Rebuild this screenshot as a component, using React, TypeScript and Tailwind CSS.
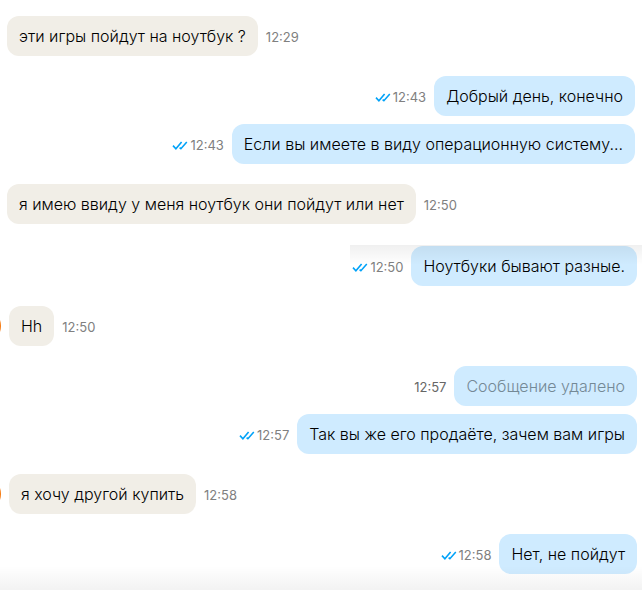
import clsx from "clsx"

type Message = {
    id: number;
    text: string;
    time: string;
    own?: boolean;
    deleted?: boolean;
    avatar?: boolean;
}

const earlier: Message[][] = [
    [{ id: 1, text: "эти игры пойдут на ноутбук ?", time: "12:29" }],
    [
        { id: 2, text: "Добрый день, конечно", time: "12:43", own: true },
        { id: 3, text: "Если вы имеете в виду операционную систему...", time: "12:43", own: true },
    ],
    [{ id: 4, text: "я имею ввиду у меня ноутбук они пойдут или нет", time: "12:50" }],
]

const recent: Message[][] = [
    [{ id: 5, text: "Ноутбуки бывают разные.", time: "12:50", own: true }],
    [{ id: 6, text: "Hh", time: "12:50", avatar: true }],
    [
        { id: 7, text: "Сообщение удалено", time: "12:57", own: true, deleted: true },
        { id: 8, text: "Так вы же его продаёте, зачем вам игры", time: "12:57", own: true },
    ],
    [{ id: 9, text: "я хочу другой купить", time: "12:58", avatar: true }],
    [{ id: 10, text: "Нет, не пойдут", time: "12:58", own: true }],
]

const ReadMark = () => (
    <svg className="h-2.5 w-4 shrink-0" viewBox="0 0 16 10" fill="none" stroke="#00a2f8" strokeWidth="1.6" aria-label="Прочитано">
        <path d="M1 5.6 3.9 8.7 9.6 2" />
        <path d="M7.6 7.6 8.9 8.7 14.8 2" />
    </svg>
)

const MessageRow = ({ message }: { message: Message }) => {
    const { text, time, own, deleted, avatar } = message

    return <div className={clsx("flex items-center", own && "flex-row-reverse")}>
        {avatar && <div className="-ml-[35px] mr-2 h-9 w-9 shrink-0 rounded-full bg-[#f57c14]" />}
        <div className={clsx("flex items-baseline gap-2", own && "flex-row-reverse")}>
            <p className={clsx(
                "rounded-xl px-3 py-2 text-[16px] leading-6 font-light",
                own ? "bg-[#cfebff]" : "bg-[#f1eee7]",
                deleted ? "text-[#748996]" : "text-black")}
            >
                {text}
            </p>
            <div className="flex items-baseline gap-0.5">
                {own && !deleted && <ReadMark />}
                <time className={clsx("text-[13px] leading-4", deleted ? "text-[#666666]" : "text-[#808080]")}>{time}</time>
            </div>
        </div>
    </div>
}

const MessageList = ({ groups }: { groups: Message[][] }) => (
    <div className="flex flex-col gap-5">
        {groups.map((group) => (
            <div key={group[0].id} className="flex flex-col gap-2">
                {group.map((message) => (
                    <MessageRow key={message.id} message={message} />
                ))}
            </div>
        ))}
    </div>
)

export default function App() {
    return <main className="overflow-hidden bg-white font-['Inter','Noto_Sans',sans-serif]">
        <section className="px-[7px] pt-4 pb-[21px]">
            <MessageList groups={earlier} />
        </section>
        <section className="relative pt-px pr-[5px] pb-4">
            <MessageList groups={recent} />
            <div className="absolute top-0 right-0 h-5 w-[292px] bg-gradient-to-b from-black/6 to-transparent" />
            <div className="absolute inset-x-0 bottom-0 h-6 bg-gradient-to-t from-black/5 to-transparent" />
        </section>
    </main>
}
